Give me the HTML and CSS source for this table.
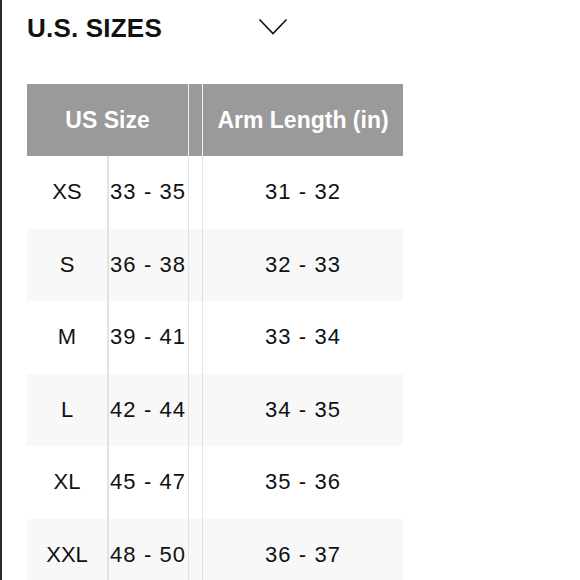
FILE: index.html
```html
<!DOCTYPE html>
<html>
<head>
<meta charset="utf-8">
<link rel="stylesheet" href="styles.css">
</head>
<body>
<div class="page">
  <div class="title-row">
    <h1 class="title">U.S. SIZES</h1>
    <svg class="chevron" width="30" height="18" viewBox="0 0 30 18"><polyline points="1.5,1.5 15,15.5 28.5,1.5" fill="none" stroke="#111" stroke-width="1.6"/></svg>
  </div>
  <div class="table">
    <div class="row head">
      <div class="cell h-size">US Size</div>
      <div class="cell h-gap"></div>
      <div class="cell h-arm">Arm Length (in)</div>
    </div>
    <div class="row"><div class="cell c-size">XS</div><div class="cell c-chest">33 - 35</div><div class="cell c-gap"></div><div class="cell c-arm">31 - 32</div></div>
    <div class="row alt"><div class="cell c-size">S</div><div class="cell c-chest">36 - 38</div><div class="cell c-gap"></div><div class="cell c-arm">32 - 33</div></div>
    <div class="row"><div class="cell c-size">M</div><div class="cell c-chest">39 - 41</div><div class="cell c-gap"></div><div class="cell c-arm">33 - 34</div></div>
    <div class="row alt"><div class="cell c-size">L</div><div class="cell c-chest">42 - 44</div><div class="cell c-gap"></div><div class="cell c-arm">34 - 35</div></div>
    <div class="row"><div class="cell c-size">XL</div><div class="cell c-chest">45 - 47</div><div class="cell c-gap"></div><div class="cell c-arm">35 - 36</div></div>
    <div class="row alt"><div class="cell c-size">XXL</div><div class="cell c-chest">48 - 50</div><div class="cell c-gap"></div><div class="cell c-arm">36 - 37</div></div>
  </div>
</div>
</body>
</html>
```

FILE: styles.css
```css
html, body {
  margin: 0;
  padding: 0;
  background: #ffffff;
}
body {
  font-family: "Liberation Sans", Arial, sans-serif;
  color: #111111;
  width: 580px;
  height: 580px;
  overflow: hidden;
}
.page {
  border-left: 2px solid #2a2a2a;
  height: 580px;
  box-sizing: border-box;
  padding-left: 25px;
}
.title-row {
  display: flex;
  align-items: flex-start;
  padding-top: 13px;
  height: 84px;
  box-sizing: border-box;
}
.title {
  margin: 0;
  font-size: 26px;
  line-height: 30px;
  font-weight: bold;
  letter-spacing: 0.2px;
  width: 231px;
}
.chevron {
  margin-top: 5px;
}
.table {
  width: 376px;
}
.row {
  display: grid;
  grid-template-columns: 80px 81px 15px 200px;
  height: 72.5px;
  align-items: stretch;
}
.row.head {
  height: 72px;
  grid-template-columns: 161px 15px 200px;
  background: #9a9a9a;
}
.row.alt {
  background: #f8f8f8;
}
.cell {
  display: flex;
  align-items: center;
  justify-content: center;
  font-size: 22px;
  box-sizing: border-box;
  white-space: nowrap;
  min-width: 0;
}
.head .cell {
  color: #ffffff;
  font-weight: bold;
  font-size: 23px;
}
.h-gap {
  border-left: 1px solid #f2f2f2;
  border-right: 1px solid #f2f2f2;
}
.c-chest {
  border-left: 2px solid #e2e2e2;
  letter-spacing: 1.1px;
  justify-content: flex-start;
  padding-left: 1px;
}
.c-gap {
  border-left: 1px solid #e2e2e2;
  border-right: 1px solid #e2e2e2;
}
.c-arm {
  letter-spacing: 1.1px;
}
```
